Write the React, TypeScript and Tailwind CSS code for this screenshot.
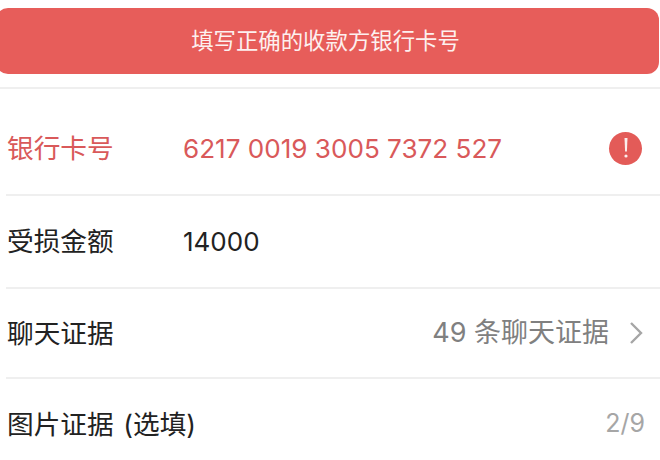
const font = "font-['Inter','Noto_Sans_CJK_SC',sans-serif]";

function Divider() {
  return <div className="ml-[6px] h-[2px] bg-[#efefef]" />;
}

export default function App() {
  return (
    <div className={`${font} h-[460px] w-[660px] overflow-hidden bg-white`}>
      <div className="pt-[8px]">
        <div className="-ml-[4px] mr-px flex h-[66px] items-center justify-center rounded-[12px] bg-[#e75d5a] pr-[4px] text-[22.4px] text-[#fdf0ef]">
          填写正确的收款方银行卡号
        </div>
      </div>
      <div className="mt-[13px] h-[2px] bg-[#efefef]" />

      <div className="flex h-[105px] items-center pl-[7px] pt-[14px] text-[26.7px] text-[#d9595a]">
        <span className="w-[176px] shrink-0">银行卡号</span>
        <span className="text-[26.1px]">6217 0019 3005 7372 527</span>
        <span className="ml-auto mr-[18px] flex h-[33px] w-[33px] items-center justify-center rounded-full bg-[#e35b58]">
          <svg width="6" height="21" viewBox="0 0 6 21" fill="#fbeeed">
            <path d="M1.5 0h3l-.6 13.5H2.1z" />
            <circle cx="3" cy="18" r="1.6" />
          </svg>
        </span>
      </div>
      <Divider />

      <div className="flex h-[91px] items-center pl-[7px] text-[26.7px] text-[#222222]">
        <span className="w-[176px] shrink-0">受损金额</span>
        <span className="text-[26px]">14000</span>
      </div>
      <Divider />

      <div className="flex h-[88px] items-center pl-[7px] text-[26.7px] text-[#222222]">
        <span>聊天证据</span>
        <span className="ml-auto text-[27px] text-[#808080]">49 条聊天证据</span>
        <svg className="ml-[20px] mr-[17px]" width="14" height="24" viewBox="0 0 14 24" fill="none" stroke="#a6a6a6" strokeWidth="2.4">
          <path d="M2 2l10 10L2 22" />
        </svg>
      </div>
      <Divider />

      <div className="flex h-[90px] items-center pl-[7px] text-[26.7px] text-[#222222]">
        <span className="[word-spacing:2px]">图片证据 (选填)</span>
        <span className="ml-auto mr-[15px] text-[25px] text-[#a6a6a6]">2/9</span>
      </div>
    </div>
  );
}
